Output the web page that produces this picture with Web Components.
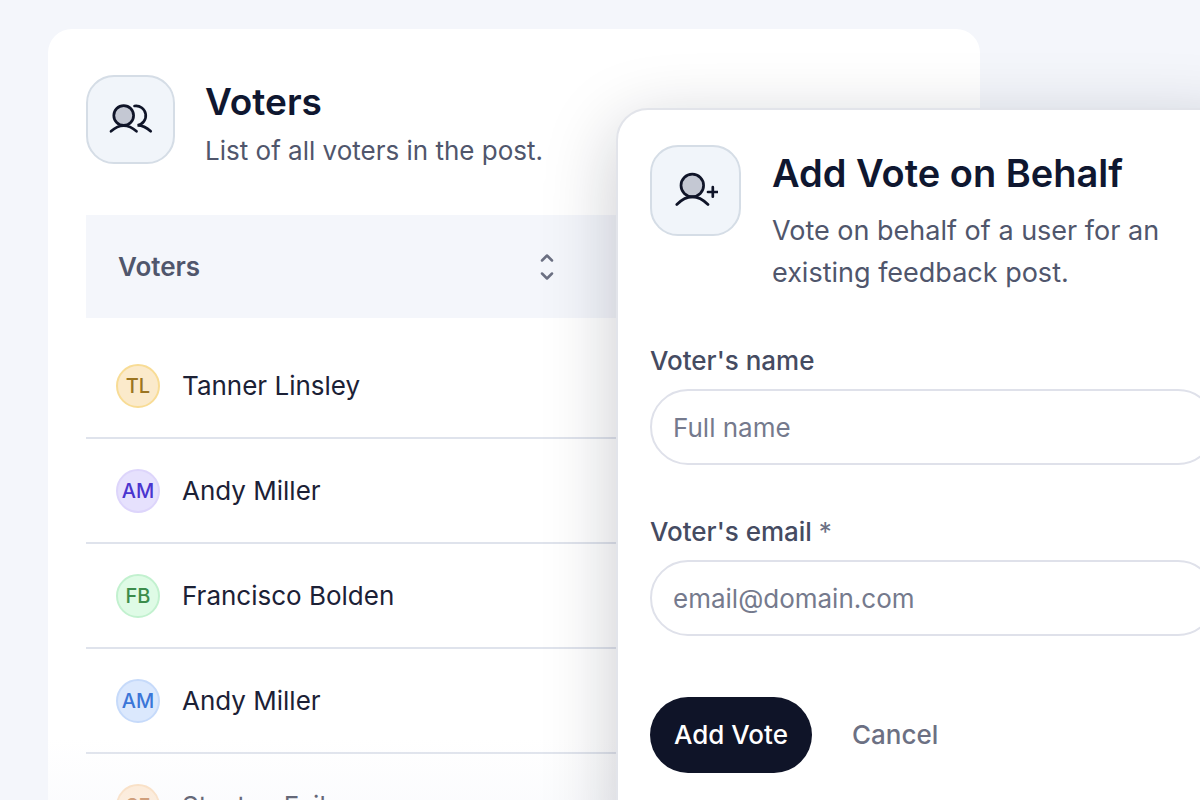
<!DOCTYPE html>
<html lang="en">
<head>
<meta charset="utf-8">
<title>Voters</title>
<style>
html, body { height: 100%; }
body { margin: 0; font-family: Inter, "Liberation Sans", sans-serif; background: #f4f6fb; }
</style>
</head>
<body>
<vote-stage>
  <voter-panel>
    <panel-heading heading="Voters" text="List of all voters in the post.">
      <svg slot="icon" width="44" height="44" viewBox="0 0 44 44" fill="none" stroke="#0f1428" stroke-width="2.7" stroke-linecap="round"><circle cx="14.7" cy="17.500" r="9.900" fill="#c4c8d3"/><path d="M2 33.300Q14.700 22 27.500 33.300"/><path d="M25.500 8A9.700 9.700 0 1 1 28.500 27.300Q35.500 27.300 41.700 33.300"/></svg>
    </panel-heading>
    <voter-table></voter-table>
  </voter-panel>
  <vote-dialog>
    <panel-heading class="dialog" heading="Add Vote on Behalf" text="Vote on behalf of a user for an existing feedback post.">
      <svg slot="icon" width="44" height="44" viewBox="0 0 44 44" fill="none" stroke="#0f1428" stroke-width="2.700" stroke-linecap="round"><circle cx="18.300" cy="16.500" r="11.300" fill="#c4c8d3"/><path d="M2.800 35.500Q18.300 20 34 35.500M34 23h9.500M38.800 18.200v9.500"/></svg>
    </panel-heading>
    <vote-form></vote-form>
  </vote-dialog>
</vote-stage>
<script>
class Base extends HTMLElement {
  connectedCallback() {
    if (this.shadowRoot) return;
    this.attachShadow({ mode: "open" }).innerHTML = this.render();
  }
}

customElements.define("vote-stage", class extends Base {
  render() {
    return `<style>
      :host { display: grid; grid-template-columns: 48px minmax(0, 568fr) minmax(0, 364fr) 220px; height: 100vh; overflow: hidden; position: relative; }
      ::slotted(voter-panel) { grid-area: 1 / 2 / 2 / 4; margin-top: 29px; }
      ::slotted(vote-dialog) { grid-area: 1 / 3 / 2 / 5; margin: 108px -50px 0 0; z-index: 2; }
      .fade { grid-area: 1 / 1 / 2 / 5; align-self: end; height: 120px; z-index: 1; background: linear-gradient(#f4f6fb00, #f4f6fbb0); pointer-events: none; }
    </style><slot></slot><div class="fade"></div>`;
  }
});

customElements.define("voter-panel", class extends Base {
  render() {
    return `<style>
      :host { display: block; box-sizing: border-box; padding: 46px 38px 0; background: #fff; border-radius: 24px; }
    </style><slot></slot>`;
  }
});

customElements.define("vote-dialog", class extends Base {
  render() {
    return `<style>
      :host { display: block; box-sizing: border-box; padding: 35px 32px 0; background: #fff; border: 2px solid #e2e4ea; border-radius: 32px; box-shadow: 0 18px 72px rgba(15, 20, 36, .22); }
    </style><slot></slot>`;
  }
});

customElements.define("panel-heading", class extends Base {
  render() {
    return `<style>
      :host { display: grid; grid-template-columns: auto 1fr; column-gap: 30px; --size: 89px; --title: 37px; --body: 26px; --lead: 36px; --text-gap: 10px; --pad: 6px; }
      :host(.dialog) { column-gap: 31px; --size: 91px; --title: 38px; --body: 27px; --lead: 42px; --text-gap: 16px; --pad: 7px; --max: 400px; }
      .tile { box-sizing: border-box; width: var(--size); height: var(--size); display: flex; align-items: center; justify-content: center; background: #f1f5fa; border: 2px solid #d5dde6; border-radius: 28px; }
      .copy { padding-top: var(--pad); }
      h2 { margin: 0; font-size: var(--title); line-height: 42px; font-weight: 600; color: #0f1730; }
      p { margin: var(--text-gap) 0 0; max-width: var(--max, none); font-size: var(--body); line-height: var(--lead); color: #50566c; }
    </style>
    <div class="tile"><slot name="icon"></slot></div>
    <div class="copy"><h2>${this.getAttribute("heading")}</h2><p>${this.getAttribute("text")}</p></div>`;
  }
});

customElements.define("voter-avatar", class extends Base {
  render() {
    return `<style>
      :host { display: flex; align-items: center; justify-content: center; box-sizing: border-box; width: 44px; height: 44px; flex: none; border: 2px solid; border-radius: 50%; font-size: 20px; font-weight: 500; }
      :host([tone=amber]) { background: #fbeacb; border-color: #f8dc95; color: #9b7420; }
      :host([tone=violet]) { background: #e6e1fd; border-color: #ddd5fb; color: #4a35cf; }
      :host([tone=green]) { background: #dffbe6; border-color: #c2f1cf; color: #3b8c4b; }
      :host([tone=blue]) { background: #dbe8fd; border-color: #c6dafa; color: #3b76d8; }
      :host([tone=orange]) { background: #ffe8cf; border-color: #fbd9b4; color: #bd7138; }
    </style><slot></slot>`;
  }
});

customElements.define("voter-table", class extends Base {
  render() {
    const rows = [["TL", "Tanner Linsley", "amber"], ["AM", "Andy Miller", "violet"], ["FB", "Francisco Bolden", "green"], ["AM", "Andy Miller", "blue"], ["SF", "Stanton Fail", "orange"]];
    return `<style>
      :host { display: block; margin-top: 46px; }
      table { width: 100%; border-collapse: separate; border-spacing: 0; }
      th { height: 103px; padding: 0 32px; background: #f4f6fb; text-align: left; }
      button { display: flex; align-items: center; justify-content: space-between; width: 55%; padding: 0; border: 0; background: none; font: 600 26px/32px Inter, "Liberation Sans", sans-serif; color: #50566c; }
      tbody::before { content: ""; display: block; height: 16px; }
      td { box-sizing: border-box; height: 105px; padding: 0 30px; border-bottom: 2px solid #dfe3ec; }
      .voter { display: flex; align-items: center; gap: 22px; font-size: 26px; line-height: 32px; color: #1c2136; }
    </style>
    <table>
      <thead><tr><th scope="col"><button type="button">Voters<svg width="16" height="28" viewBox="0 0 16 28" fill="none" stroke="#6c7082" stroke-width="2.500" stroke-linecap="round" stroke-linejoin="round"><path d="M4 7.500L9 2.500L14 7.500M4 20.500L9 25.500L14 20.500"/></svg></button></th></tr></thead>
      <tbody>${rows.map(([i, n, t]) => `<tr><td><div class="voter"><voter-avatar tone="${t}">${i}</voter-avatar>${n}</div></td></tr>`).join("")}</tbody>
    </table>`;
  }
});

customElements.define("vote-form", class extends Base {
  render() {
    return `<style>
      :host { display: block; margin-top: 51px; }
      .field { display: flex; flex-direction: column; gap: 12px; margin-bottom: 51px; }
      label { font-size: 26px; line-height: 32px; font-weight: 500; color: #454b61; }
      label span { color: #6c7083; font-weight: 400; }
      input { box-sizing: border-box; width: 100%; height: 76px; padding: 0 21px; border: 2px solid #dfe1ea; border-radius: 38px; background: #fff; font: 400 26px/32px Inter, "Liberation Sans", sans-serif; color: #1c2136; outline: 0; }
      input::placeholder { color: #757a8d; opacity: 1; }
      .actions { display: flex; align-items: center; gap: 16px; padding-top: 10px; }
      button { height: 76px; padding: 0 24px; border: 0; border-radius: 38px; font: 500 26px/32px Inter, "Liberation Sans", sans-serif; background: none; color: #6c7083; }
      .primary { background: #0f1428; color: #fff; }
    </style>
    <form>
      <div class="field"><label for="name">Voter's name</label><input id="name" type="text" placeholder="Full name"></div>
      <div class="field"><label for="email">Voter's email <span>*</span></label><input id="email" type="email" placeholder="email@domain.com"></div>
      <div class="actions"><button class="primary" type="button">Add Vote</button><button type="button">Cancel</button></div>
    </form>`;
  }
});
</script>
</body>
</html>
